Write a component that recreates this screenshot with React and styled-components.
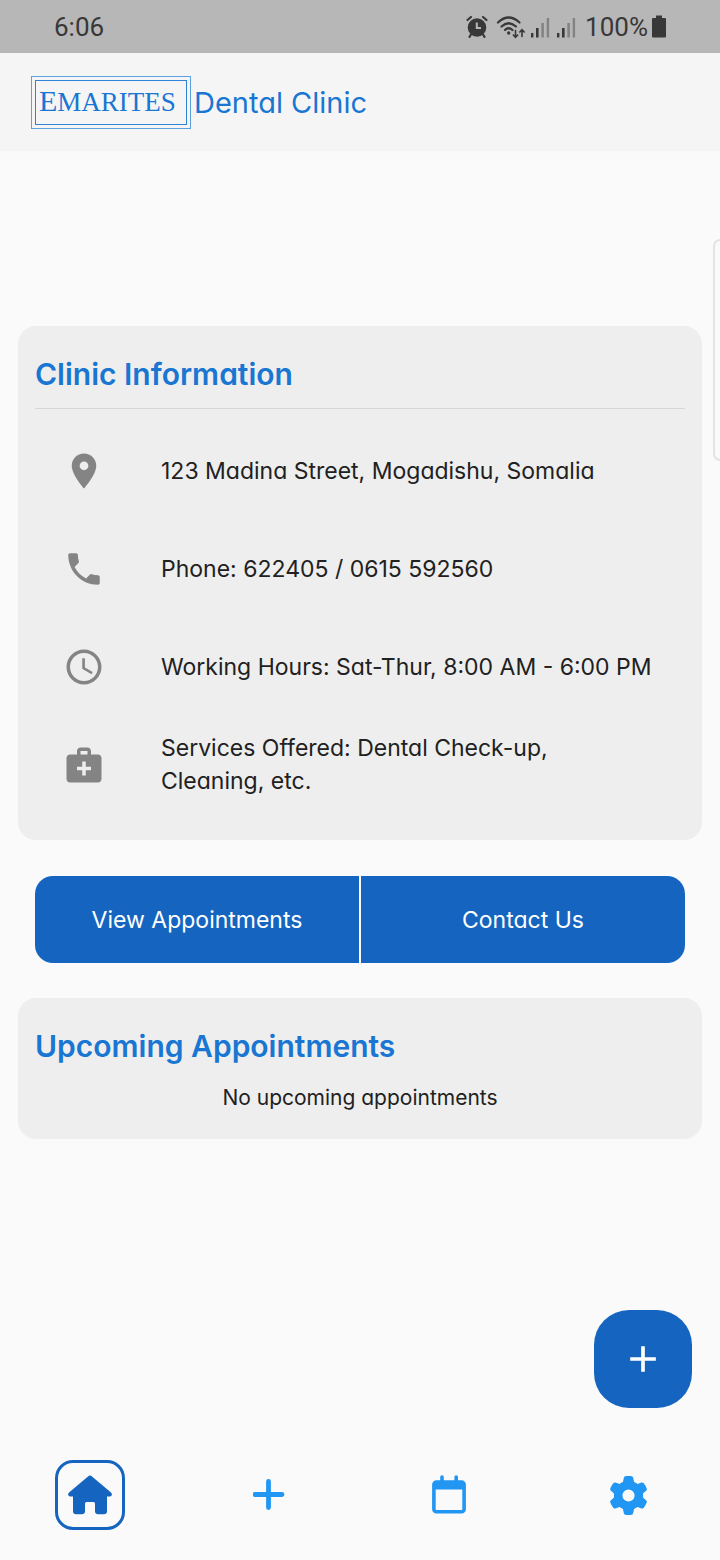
import React from "react";
import styled, { createGlobalStyle } from "styled-components";
import { MdLocationOn, MdPhone, MdAccessTime, MdMedicalServices, MdAdd } from "react-icons/md";
import { FaGear } from "react-icons/fa6";

const GlobalStyle = createGlobalStyle`
  * { box-sizing: border-box; }
  body {
    margin: 0;
    background: #fafafa;
    color: #212121;
    font-family: Inter, "Open Sans", sans-serif;
    font-feature-settings: "cv11";
  }
  h1, h2, p, ul { margin: 0; padding: 0; }
  button { font: inherit; font-feature-settings: inherit; border: 0; padding: 0; cursor: pointer; }
`;

const Screen = styled.div`
  position: relative;
  display: flex;
  flex-direction: column;
  min-height: 100vh;
  overflow-x: hidden;
`;

const StatusBar = styled.div`
  display: flex;
  align-items: center;
  justify-content: space-between;
  height: 53px;
  padding: 0 54px;
  background: #b7b7b7;
  color: #383838;
  font-family: Roboto, sans-serif;
  font-size: 26px;
`;

const StatusIcons = styled.div`
  display: flex;
  align-items: center;
  gap: 6px;
  svg { display: block; }
`;

const Battery = styled.div`
  display: flex;
  align-items: center;
  gap: 4px;
  padding-left: 2px;
`;

const Header = styled.header`
  display: flex;
  align-items: center;
  gap: 3px;
  height: 98px;
  padding: 0 31px;
  background: #f5f5f5;
  color: #1976d2;
`;

const LogoFrame = styled.div`
  padding: 3px;
  border: 1px solid #5ba0e0;
`;

const LogoText = styled.div`
  width: 152px;
  height: 45px;
  padding-left: 3px;
  border: 1px solid #2f83d6;
  font-family: "Liberation Serif", serif;
  font-size: 27px;
  line-height: 40px;
  white-space: nowrap;
  &::first-letter { font-size: 30px; }
`;

const ClinicName = styled.h1`
  padding-top: 2px;
  font-size: 29px;
  font-weight: 400;
  line-height: 42px;
`;

const Main = styled.main`
  display: flex;
  flex-direction: column;
  flex: 1;
  padding: 175px 18px 0;
`;

const Card = styled.section`
  padding: 27px 17px 26px;
  border-radius: 18px;
  background: #eeeeee;
`;

const CardTitle = styled.h2`
  color: #1976d2;
  font-size: 30px;
  font-weight: 600;
  line-height: 42px;
`;

const InfoList = styled.ul`
  margin-top: 13px;
  padding-top: 13px;
  border-top: 1px solid #d6d6d6;
  list-style: none;
`;

const InfoRow = styled.li`
  display: flex;
  align-items: center;
  gap: 56px;
  min-height: 98px;
  padding: 0 28px;
  font-size: 23px;
  line-height: 33px;
  svg { flex: none; color: #848484; }
`;

const Actions = styled.div`
  display: flex;
  gap: 2px;
  margin: 36px 17px 35px;
  border-radius: 18px;
  overflow: hidden;
`;

const ActionButton = styled.button`
  flex: 1;
  height: 87px;
  background: #1565c0;
  color: #ffffff;
  font-size: 23px;
`;

const EmptyNote = styled.p`
  padding: 17px 0 1px;
  font-size: 21px;
  line-height: 28px;
  text-align: center;
`;

const AddButton = styled.button`
  display: grid;
  place-items: center;
  align-self: flex-end;
  width: 98px;
  height: 98px;
  margin: auto 10px 22px 0;
  border-radius: 35px;
  background: #1565c0;
  color: #ffffff;
`;

const NavBar = styled.nav`
  display: grid;
  grid-template-columns: repeat(4, 1fr);
  height: 130px;
  padding-right: 2px;
`;

const NavButton = styled.button`
  display: grid;
  place-items: center;
  background: none;
  color: ${(p) => (p.$active ? "#1565c0" : "#2196f3")};
`;

const ActiveFrame = styled.span`
  display: grid;
  place-items: center;
  width: 70px;
  height: 70px;
  border: 3px solid #1565c0;
  border-radius: 18px;
`;

const EdgeHandle = styled.div`
  position: absolute;
  top: 239px;
  right: 0;
  width: 7px;
  height: 222px;
  border: 2px solid #e3e3e3;
  border-right: 0;
  border-radius: 8px 0 0 8px;
`;

const AlarmIcon = () => (
  <svg width="24" height="24" viewBox="0 0 24 24" fill="none" stroke="currentColor">
    <circle cx="12" cy="12.500" r="9.300" fill="currentColor" stroke="none" />
    <path d="M2.500 5L6 2M21.500 5L18 2M6 19.500L4.500 21.800M18 19.500L19.500 21.800" strokeWidth="2.200" strokeLinecap="round" />
    <path d="M11.800 7.500V13H16" stroke="#b7b7b7" strokeWidth="2" />
  </svg>
);

const WifiIcon = () => (
  <svg width="30" height="24" viewBox="0 0 30 24" fill="none" stroke="currentColor" strokeWidth="2.200" strokeLinecap="round">
    <path d="M3 7.500Q13.500 -2.500 24.500 7.500M6.500 11.500Q13.500 5 21 11.500M10 15Q13.500 11.500 17.500 15" />
    <circle cx="13.700" cy="18" r="1.700" fill="currentColor" stroke="none" />
    <path d="M20.500 15.500V22M18.300 20L20.500 22.300L22.700 20M27 21.500V15M24.800 17L27 14.700L29.200 17" strokeWidth="1.600" />
  </svg>
);

const SignalIcon = () => (
  <svg width="20" height="22" viewBox="0 0 20 22" fill="currentColor">
    <rect x="0" y="17" width="2.400" height="4.500" />
    <rect x="5" y="12" width="2.600" height="9.500" />
    <g opacity="0.4">
      <rect x="10.300" y="7" width="2.600" height="14.500" />
      <rect x="15.700" y="2" width="2.400" height="19.500" />
    </g>
  </svg>
);

const BatteryIcon = () => (
  <svg width="14" height="23" viewBox="0 0 14 23" fill="currentColor">
    <path d="M4 0.500h6v2.500h3a1 1 0 0 1 1 1v17.500a1 1 0 0 1-1 1h-12a1 1 0 0 1-1-1v-17.500a1 1 0 0 1 1-1h3z" />
  </svg>
);

const HomeIcon = () => (
  <svg width="44" height="40" viewBox="0 0 44 40" fill="currentColor">
    <path d="M20.300 1.200Q22 -0.200 23.700 1.200L43 17.500Q44.300 19 43.700 20.300Q43.200 21.600 41.500 21.600H39V36Q39 39.200 35.800 39.200H30.200Q27 39.200 27 36V28.500Q27 27 25.500 27H18.500Q17 27 17 28.500V36Q17 39.200 13.800 39.200H8.200Q5 39.200 5 36V21.600H2.500Q0.800 21.600 0.300 20.300Q-0.300 19 1 17.500Z" />
  </svg>
);

const PlusIcon = () => (
  <svg width="32" height="32" viewBox="0 0 32 32" stroke="currentColor" strokeWidth="4.800" strokeLinecap="round">
    <path d="M15.500 2.500V28.500M2 15.500H29" />
  </svg>
);

const CalendarIcon = () => (
  <svg width="34" height="40" viewBox="0 0 34 40" fill="none" stroke="currentColor">
    <path d="M10 2V7M24.200 2V7" strokeWidth="3.600" strokeLinecap="round" />
    <rect x="1.900" y="7" width="30.200" height="29.800" rx="2.500" strokeWidth="3.600" />
    <path d="M3 8h28v6.500H3z" fill="currentColor" stroke="none" />
  </svg>
);

const clinicDetails = [
  { Icon: MdLocationOn, text: "123 Madina Street, Mogadishu, Somalia" },
  { Icon: MdPhone, text: "Phone: 622405 / 0615 592560" },
  { Icon: MdAccessTime, text: "Working Hours: Sat-Thur, 8:00 AM - 6:00 PM" },
  { Icon: MdMedicalServices, text: "Services Offered: Dental Check-up, Cleaning, etc." },
];

export default function App() {
  return (
    <Screen>
      <GlobalStyle />
      <StatusBar>
        <span>6:06</span>
        <StatusIcons>
          <AlarmIcon />
          <WifiIcon />
          <SignalIcon />
          <SignalIcon />
          <Battery>
            <span>100%</span>
            <BatteryIcon />
          </Battery>
        </StatusIcons>
      </StatusBar>
      <Header>
        <LogoFrame>
          <LogoText>EMARITES</LogoText>
        </LogoFrame>
        <ClinicName>Dental Clinic</ClinicName>
      </Header>
      <Main>
        <Card>
          <CardTitle>Clinic Information</CardTitle>
          <InfoList>
            {clinicDetails.map(({ Icon, text }) => (
              <InfoRow key={text}>
                <Icon size={42} />
                <span>{text}</span>
              </InfoRow>
            ))}
          </InfoList>
        </Card>
        <Actions>
          <ActionButton>View Appointments</ActionButton>
          <ActionButton>Contact Us</ActionButton>
        </Actions>
        <Card>
          <CardTitle>Upcoming Appointments</CardTitle>
          <EmptyNote>No upcoming appointments</EmptyNote>
        </Card>
        <AddButton aria-label="Add appointment">
          <MdAdd size={44} />
        </AddButton>
      </Main>
      <NavBar>
        <NavButton $active aria-label="Home">
          <ActiveFrame>
            <HomeIcon />
          </ActiveFrame>
        </NavButton>
        <NavButton aria-label="Add">
          <PlusIcon />
        </NavButton>
        <NavButton aria-label="Calendar">
          <CalendarIcon />
        </NavButton>
        <NavButton aria-label="Settings">
          <FaGear size={39} />
        </NavButton>
      </NavBar>
      <EdgeHandle />
    </Screen>
  );
}
